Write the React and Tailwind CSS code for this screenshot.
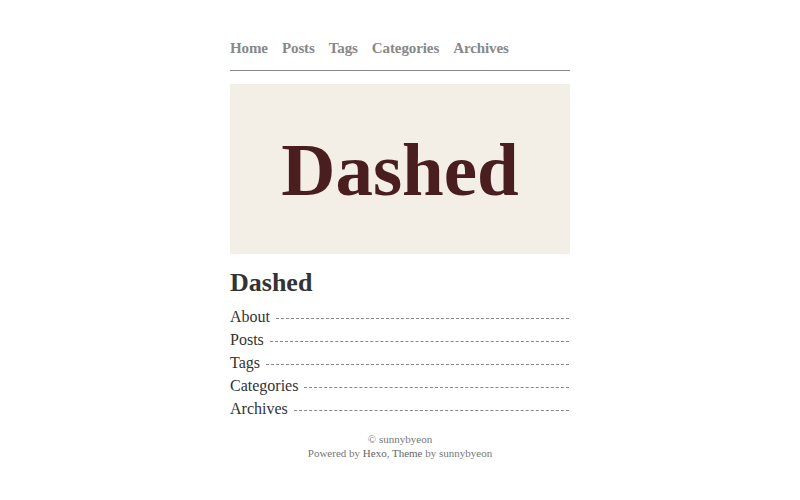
import React from 'react'

const NAV = ['Home', 'Posts', 'Tags', 'Categories', 'Archives']
const LINKS = ['About', 'Posts', 'Tags', 'Categories', 'Archives']

function App() {
  return (
    <div className="min-h-screen bg-white flex justify-center" style={{ fontFamily: '"Liberation Serif", serif' }}>
      <div className="w-[340px] pt-[38px]">
        <nav className="flex gap-[14px] pb-[12px] border-b border-[#888] text-[15px] font-bold text-[#888] leading-[20px] tracking-[-0.1px]">
          {NAV.map(n => (
            <a key={n} href="#">{n}</a>
          ))}
        </nav>

        <div className="mt-[13px] h-[170px] bg-[#f4efe6] flex items-center justify-center">
          <span className="text-[75px] font-bold text-[#4a1e1e] leading-none">Dashed</span>
        </div>

        <h1 className="mt-[14px] text-[26px] font-bold text-[#333] leading-[30px]">Dashed</h1>

        <ul className="mt-[7px] text-[#333]">
          {LINKS.map(l => (
            <li key={l} className="flex items-center h-[23px] text-[16px]">
              <span>{l}</span>
              <span className="flex-1 ml-[6px] mr-px mt-[3px] border-b border-dashed border-[#888]" />
            </li>
          ))}
        </ul>

        <footer className="mt-[12px] text-center text-[11px] leading-[14px] text-[#777]">
          <p>© sunnybyeon</p>
          <p>Powered by <a href="#" className="text-[#666]">Hexo</a>, <a href="#" className="text-[#666]">Theme</a> by sunnybyeon</p>
        </footer>
      </div>
    </div>
  )
}

export default App
